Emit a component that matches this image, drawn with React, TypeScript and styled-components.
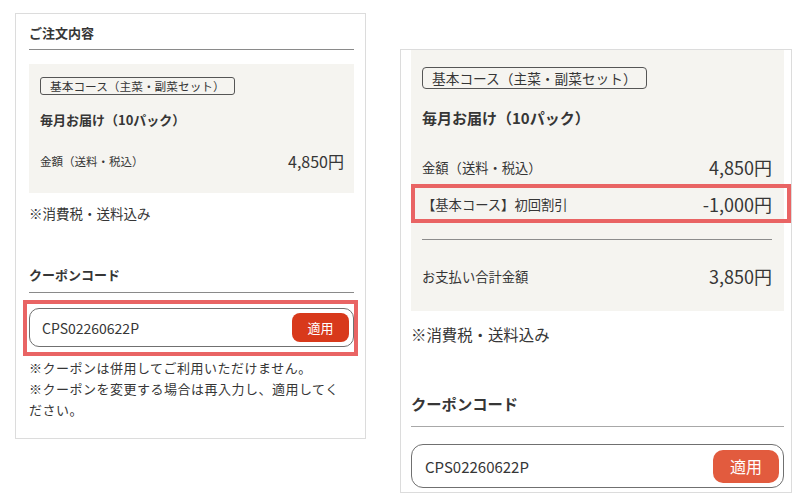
import { Fragment } from "react";
import styled, { createGlobalStyle, css } from "styled-components";

const GlobalStyle = createGlobalStyle`
  html, body {
    margin: 0;
    padding: 0;
    background: #ffffff;
  }
  body {
    font-family: "Noto Sans CJK JP", "Noto Sans", sans-serif;
    color: #363636;
  }
`;

type Lg = { $lg?: boolean };

// pick a value for the small (left) or large (right) card
const pick =
  (sm: string, lg: string) =>
  (p: Lg) =>
    p.$lg ? lg : sm;

const Page = styled.div`
  display: flex;
  align-items: flex-start;
  gap: 34px;
  padding: 13px 0 0 15px;
  height: 495px;
  box-sizing: border-box;
  overflow: hidden;
`;

const Card = styled.div<Lg>`
  box-sizing: border-box;
  border: 1px solid #dcdcdc;
  background: #fff;
  display: flex;
  flex-direction: column;
  width: ${pick("351px", "392px")};
  margin-top: ${pick("0", "36px")};
  height: ${pick("auto", "444px")};
  overflow: hidden;
  padding: ${pick("9px 11px 18px 13px", "0 7px 0 10px")};
`;

const Heading = styled.div<Lg>`
  font-weight: 700;
  font-size: ${pick("13px", "15.3px")};
  line-height: ${pick("20px", "22px")};
  padding-bottom: ${pick("6px", "12px")};
  border-bottom: 1px solid ${pick("#8a8a8a", "#a8a8a8")};
`;

const CouponHeading = styled(Heading)`
  margin-top: ${pick("42px", "47px")};
  padding-bottom: ${pick("7px", "12px")};
`;

const Highlight = css`
  content: "";
  position: absolute;
  border: 4px solid #e96464;
  pointer-events: none;
`;

const SummaryBox = styled.div<Lg & { $withTitle?: boolean }>`
  background: #f5f4f0;
  display: flex;
  flex-direction: column;
  align-items: flex-start;
  margin-top: ${(p) => (p.$withTitle ? "14px" : "0")};
  padding: ${pick("13px 10px 20px 11px", "17px 12px 22px 11px")};
`;

const CourseBadge = styled.span<Lg>`
  box-sizing: border-box;
  display: inline-block;
  border: 1px solid #555;
  border-radius: ${pick("3px", "4px")};
  height: ${pick("18px", "22px")};
  line-height: ${pick("16px", "20px")};
  font-size: ${pick("11.7px", "13.7px")};
  padding: 0 9px;
`;

const ProductName = styled.div<Lg>`
  font-weight: 700;
  font-size: ${pick("13px", "15px")};
  line-height: ${pick("20px", "22px")};
  margin-top: ${pick("15px", "18px")};
`;

const PriceRow = styled.div<Lg & { $gap: string; $marked?: boolean }>`
  position: relative;
  align-self: stretch;
  display: flex;
  justify-content: space-between;
  align-items: center;
  height: ${pick("24px", "26px")};
  margin-top: ${(p) => p.$gap};

  ${(p) =>
    p.$marked &&
    css`
      &::after {
        ${Highlight}
        top: -7px;
        bottom: -6px;
        left: -11px;
        right: -19px;
      }
    `}
`;

const RowLabel = styled.span<Lg>`
  font-size: ${pick("11.5px", "13.3px")};
`;

const RowPrice = styled.span<Lg>`
  font-size: ${pick("16px", "18px")};
`;

const Divider = styled.div`
  align-self: stretch;
  margin-top: 22px;
  border-top: 1px solid #8c8c8c;
`;

const TaxNote = styled.div<Lg>`
  font-size: ${pick("13.5px", "15.4px")};
  line-height: ${pick("20px", "22px")};
  margin-top: ${pick("10px", "12px")};
`;

const CouponField = styled.div<Lg & { $marked?: boolean }>`
  position: relative;
  box-sizing: border-box;
  display: flex;
  align-items: center;
  justify-content: space-between;
  border: 1px solid #707070;
  background: #fff;
  margin-top: ${pick("15px", "17px")};
  height: ${pick("39px", "44px")};
  border-radius: ${pick("10px", "12px")};
  padding: ${pick("0 4px 0 12px", "0 4px 0 13px")};

  ${(p) =>
    p.$marked &&
    css`
      &::after {
        ${Highlight}
        top: -9px;
        bottom: -10px;
        left: -7px;
        right: -5px;
      }
    `}
`;

const CouponCode = styled.span<Lg>`
  font-size: ${pick("14px", "15px")};
`;

const ApplyButton = styled.button<Lg>`
  border: none;
  color: #fff;
  font-family: inherit;
  padding: 0;
  background: ${pick("#d8391b", "#e25b3e")};
  width: ${pick("57px", "66px")};
  height: ${pick("29px", "33px")};
  border-radius: ${pick("8px", "10px")};
  font-size: ${pick("13px", "16px")};
`;

const Notes = styled.div`
  margin-top: 10px;
  max-width: 316px;
  font-size: 13px;
  letter-spacing: 0.5px;
  line-height: 21px;
`;

type Row = {
  label: string;
  price: string;
  gap: string;
  marked?: boolean;
  dividerBefore?: boolean;
};

interface OrderCardProps {
  lg?: boolean;
  showTitle?: boolean;
  rows: Row[];
  markCoupon?: boolean;
  showNotes?: boolean;
}

const OrderCard = ({ lg, showTitle, rows, markCoupon, showNotes }: OrderCardProps) => (
  <Card $lg={lg}>
    {showTitle && <Heading $lg={lg}>ご注文内容</Heading>}
    <SummaryBox $lg={lg} $withTitle={showTitle}>
      <CourseBadge $lg={lg}>基本コース（主菜・副菜セット）</CourseBadge>
      <ProductName $lg={lg}>毎月お届け（10パック）</ProductName>
      {rows.map((row) => (
        <Fragment key={row.label}>
          {row.dividerBefore && <Divider />}
          <PriceRow $lg={lg} $gap={row.gap} $marked={row.marked}>
            <RowLabel $lg={lg}>{row.label}</RowLabel>
            <RowPrice $lg={lg}>{row.price}</RowPrice>
          </PriceRow>
        </Fragment>
      ))}
    </SummaryBox>
    <TaxNote $lg={lg}>※消費税・送料込み</TaxNote>
    <CouponHeading $lg={lg}>クーポンコード</CouponHeading>
    <CouponField $lg={lg} $marked={markCoupon}>
      <CouponCode $lg={lg}>CPS02260622P</CouponCode>
      <ApplyButton $lg={lg}>適用</ApplyButton>
    </CouponField>
    {showNotes && (
      <Notes>
        ※クーポンは併用してご利用いただけません。
        <br />
        ※クーポンを変更する場合は再入力し、適用してください。
      </Notes>
    )}
  </Card>
);

const App = () => (
  <>
    <GlobalStyle />
    <Page>
      <OrderCard
        showTitle
        markCoupon
        showNotes
        rows={[{ label: "金額（送料・税込）", price: "4,850円", gap: "19px" }]}
      />
      <OrderCard
        lg
        rows={[
          { label: "金額（送料・税込）", price: "4,850円", gap: "25px" },
          { label: "【基本コース】初回割引", price: "-1,000円", gap: "11px", marked: true },
          { label: "お支払い合計金額", price: "3,850円", gap: "23px", dividerBefore: true },
        ]}
      />
    </Page>
  </>
);

export default App;
